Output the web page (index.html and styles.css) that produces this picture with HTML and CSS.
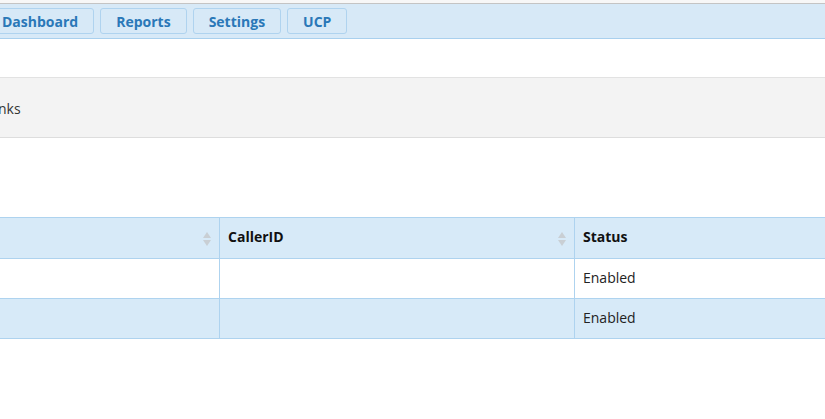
FILE: index.html
```html
<!DOCTYPE html>
<html>
<head>
<meta charset="utf-8">
<link rel="stylesheet" href="styles.css">
</head>
<body>
<div class="topstrip"></div>
<nav class="navbar">
  <a class="navbtn first">Dashboard</a>
  <a class="navbtn">Reports</a>
  <a class="navbtn">Settings</a>
  <a class="navbtn">UCP</a>
</nav>
<div class="spacer"></div>
<div class="crumb"><span class="crumb-text">Trunks</span></div>
<div class="tablewrap">
  <table class="grid">
    <thead>
      <tr>
        <th class="c1">Name<span class="sort"></span></th>
        <th class="c2">CallerID<span class="sort"></span></th>
        <th class="c3">Status</th>
      </tr>
    </thead>
    <tbody>
      <tr><td></td><td></td><td>Enabled</td></tr>
      <tr class="alt"><td></td><td></td><td>Enabled</td></tr>
    </tbody>
  </table>
</div>
</body>
</html>
```
FILE: styles.css
```css
html, body {
  margin: 0;
  padding: 0;
  background: #ffffff;
  font-family: "Open Sans", "Noto Sans", sans-serif;
  overflow: hidden;
}
.topstrip {
  height: 3px;
  background: #f7f7f7;
}
.navbar {
  display: flex;
  align-items: flex-start;
  gap: 6px;
  box-sizing: border-box;
  height: 36px;
  padding-top: 4px;
  border-top: 1px solid #c4c4c4;
  border-bottom: 1px solid #a9d0ee;
  background: #d7e9f7;
}
.navbtn {
  display: block;
  box-sizing: border-box;
  height: 26px;
  line-height: 25px;
  padding: 0 15px;
  border: 1px solid #afd3ef;
  border-radius: 3px;
  background: #d7e9f7;
  color: #2a78b8;
  font-weight: 700;
  font-size: 14px;
}
.navbtn.first {
  margin-left: -14px;
}
.spacer {
  height: 38px;
}
.crumb {
  box-sizing: border-box;
  height: 61px;
  border-top: 1px solid #e2e2e2;
  border-bottom: 1px solid #dddddd;
  background: #f3f3f3;
  display: flex;
  align-items: center;
}
.crumb-text {
  margin-left: -24px;
  padding-top: 1px;
  font-size: 14px;
  color: #333333;
}
.tablewrap {
  margin-top: 79px;
  margin-left: -140px;
}
.grid {
  border-collapse: collapse;
  width: 1100px;
  font-size: 14px;
}
.grid th, .grid td {
  border: 1px solid #aed3ef;
  padding: 0 8px 3px;
  text-align: left;
  color: #222222;
}
.grid th {
  height: 37px;
  background: #d7eaf8;
  font-weight: 700;
  color: #111111;
  position: relative;
}
.grid td {
  height: 36px;
}
.grid tr.alt td {
  background: #d7eaf8;
}
.c1 { width: 342px; }
.c2 { width: 338px; }
.sort {
  position: absolute;
  right: 8px;
  top: 14px;
  width: 8px;
  height: 14px;
}
.sort::before, .sort::after {
  content: "";
  position: absolute;
  left: 0;
  border-left: 4px solid transparent;
  border-right: 4px solid transparent;
}
.sort::before {
  top: 0;
  border-bottom: 6px solid #c9cfd4;
}
.sort::after {
  bottom: 0;
  border-top: 6px solid #c9cfd4;
}
```
